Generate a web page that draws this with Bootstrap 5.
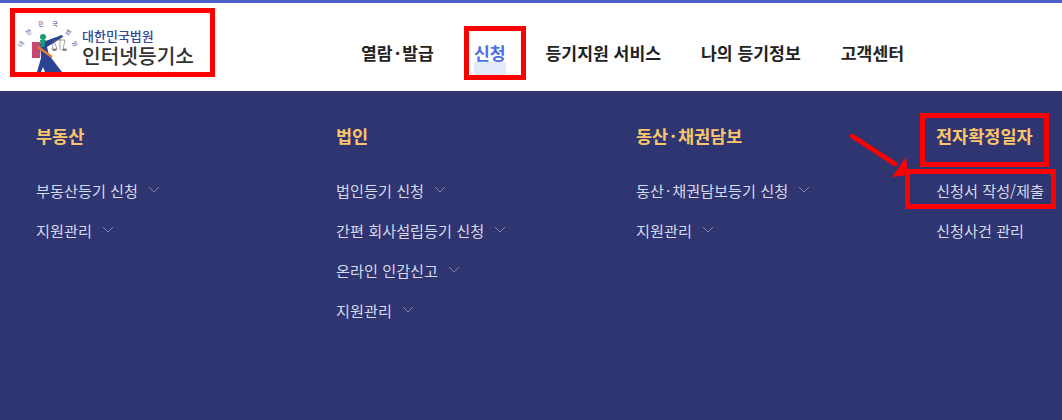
<!DOCTYPE html>
<html lang="ko">
<head>
  <meta charset="UTF-8">
  <title>인터넷등기소</title>
  <link href="https://cdn.jsdelivr.net/npm/bootstrap@5.3.3/dist/css/bootstrap.min.css" rel="stylesheet">
  <style>
    body {
      width: 1062px;
      height: 420px;
      overflow: hidden;
      position: relative;
      font-family: "Noto Sans CJK KR", "Liberation Sans", sans-serif;
      background: #2f3570;
    }
    .site-head {
      height: 91px;
      background: #fff;
      border-top: 3px solid #4b60c4;
    }
    .logo-wrap { width: 361px; padding: 17px 0 0 15px; flex-shrink: 0; }
    .logo-sub { font-size: 13px; line-height: 15px; color: #2f4a96; font-weight: 500; }
    .logo-main { font-size: 20.3px; line-height: 24px; color: #333; font-weight: 500; }
    .logo-text { padding: 8px 0 0 1px; }
    .top-menu { padding-top: 38px; gap: 40px; }
    .top-menu a { font-size: 17.2px; line-height: 24px; font-weight: 700; color: #222; text-decoration: none; white-space: nowrap; }
    .top-menu a.on { color: #4d6de6; background: linear-gradient(transparent 42%, #e3ebfa 42%, #e3ebfa 76%, transparent 76%); }
    .mid-dot { margin: 0 2px; }
    .panel-cols { padding-left: 36px; }
    .panel-col { width: 300px; flex-shrink: 0; padding-top: 33px; }
    .panel-col:last-child { width: 126px; }
    .panel-title { font-size: 17.5px; line-height: 24px; font-weight: 700; color: #fbc66b; margin-bottom: 31px; white-space: nowrap; }
    .panel-link { font-size: 15.2px; line-height: 22px; color: #d5d9ea; margin-bottom: 18px; display: flex; align-items: center; gap: 10px; white-space: nowrap; }
    .panel-link svg { display: block; margin-top: -2px; }
    .mark-box { position: absolute; border: 5px solid #f00; }
    .mark-logo { left: 10px; top: 8px; width: 205px; height: 69px; }
    .mark-nav { left: 464px; top: 26px; width: 62px; height: 54px; }
    .mark-title { left: 920px; top: 113px; width: 129px; height: 54px; }
    .mark-link { left: 905px; top: 169px; width: 151px; height: 40px; }
    .mark-arrow { position: absolute; left: 845px; top: 128px; }
  </style>
</head>
<body>

<!-- Header -->
<div class="site-head d-flex">
  <div class="logo-wrap d-flex">
    <svg width="66" height="52" viewBox="-3 0 66 52">
      <g font-size="6" fill="#3c4f9c" text-anchor="middle" font-family="Noto Sans CJK KR, sans-serif">
        <text x="5" y="25" transform="rotate(-60 5 25)">대</text>
        <text x="12" y="14" transform="rotate(-35 12 14)">한</text>
        <text x="23" y="6">민</text>
        <text x="37" y="6">국</text>
        <text x="49" y="14" transform="rotate(35 49 14)">법</text>
        <text x="55" y="25" transform="rotate(60 55 25)">원</text>
      </g>
      <rect x="14" y="22" width="8" height="16" fill="#c8476e"/>
      <path d="M22 23L44 15l1 2-16 10 2 8 13 17H27l-2-5-2 5h-4l4-14z" fill="#2a4395"/>
      <path d="M20 27l14 10" stroke="#e8792b" stroke-width="2.500" fill="none"/>
      <circle cx="25" cy="17" r="3" fill="#1b9a76"/>
      <path d="M22 20h6l-2 7h-3z" fill="#1b9a76"/>
      <path d="M42 15v15M36 20h11M36 20l-2 9h5zM47 20l-2 9h4" fill="none" stroke="#666" stroke-width=".6"/>
      <path d="M34 29a2.500 2 0 0 0 5 0zM44 29a2.500 2 0 0 0 5 0z" fill="#777"/>
    </svg>
    <div class="logo-text">
      <div class="logo-sub">대한민국법원</div>
      <div class="logo-main">인터넷등기소</div>
    </div>
  </div>
  <nav class="top-menu d-flex">
    <a href="#">열람<span class="mid-dot">·</span>발급</a>
    <a href="#" class="on">신청</a>
    <a href="#">등기지원 서비스</a>
    <a href="#">나의 등기정보</a>
    <a href="#">고객센터</a>
  </nav>
</div>

<!-- Menu panel -->
<div class="panel-cols d-flex">
  <div class="panel-col">
    <div class="panel-title">부동산</div>
    <div class="panel-link">부동산등기 신청 <svg width="12" height="7" viewBox="0 0 12 7"><path d="M1 1l5 5 5-5" fill="none" stroke="#7f85ad"/></svg></div>
    <div class="panel-link">지원관리 <svg width="12" height="7" viewBox="0 0 12 7"><path d="M1 1l5 5 5-5" fill="none" stroke="#7f85ad"/></svg></div>
  </div>
  <div class="panel-col">
    <div class="panel-title">법인</div>
    <div class="panel-link">법인등기 신청 <svg width="12" height="7" viewBox="0 0 12 7"><path d="M1 1l5 5 5-5" fill="none" stroke="#7f85ad"/></svg></div>
    <div class="panel-link">간편 회사설립등기 신청 <svg width="12" height="7" viewBox="0 0 12 7"><path d="M1 1l5 5 5-5" fill="none" stroke="#7f85ad"/></svg></div>
    <div class="panel-link">온라인 인감신고 <svg width="12" height="7" viewBox="0 0 12 7"><path d="M1 1l5 5 5-5" fill="none" stroke="#7f85ad"/></svg></div>
    <div class="panel-link">지원관리 <svg width="12" height="7" viewBox="0 0 12 7"><path d="M1 1l5 5 5-5" fill="none" stroke="#7f85ad"/></svg></div>
  </div>
  <div class="panel-col">
    <div class="panel-title">동산<span class="mid-dot">·</span>채권담보</div>
    <div class="panel-link"><span>동산<span class="mid-dot">·</span>채권담보등기 신청</span> <svg width="12" height="7" viewBox="0 0 12 7"><path d="M1 1l5 5 5-5" fill="none" stroke="#7f85ad"/></svg></div>
    <div class="panel-link">지원관리 <svg width="12" height="7" viewBox="0 0 12 7"><path d="M1 1l5 5 5-5" fill="none" stroke="#7f85ad"/></svg></div>
  </div>
  <div class="panel-col">
    <div class="panel-title">전자확정일자</div>
    <div class="panel-link">신청서 작성/제출</div>
    <div class="panel-link">신청사건 관리</div>
  </div>
</div>

<!-- Red annotations over the screenshot -->
<div class="mark-box mark-logo"></div>
<div class="mark-box mark-nav"></div>
<div class="mark-box mark-title"></div>
<div class="mark-box mark-link"></div>
<svg class="mark-arrow" width="65" height="52" viewBox="0 0 65 52">
  <path d="M7 8L50 36" stroke="#f00" stroke-width="4.500" stroke-linecap="round"/>
  <path d="M61 29l2 18-16 2z" fill="#f00"/>
</svg>

<script src="https://cdn.jsdelivr.net/npm/bootstrap@5.3.3/dist/js/bootstrap.bundle.min.js"></script>
</body>
</html>
